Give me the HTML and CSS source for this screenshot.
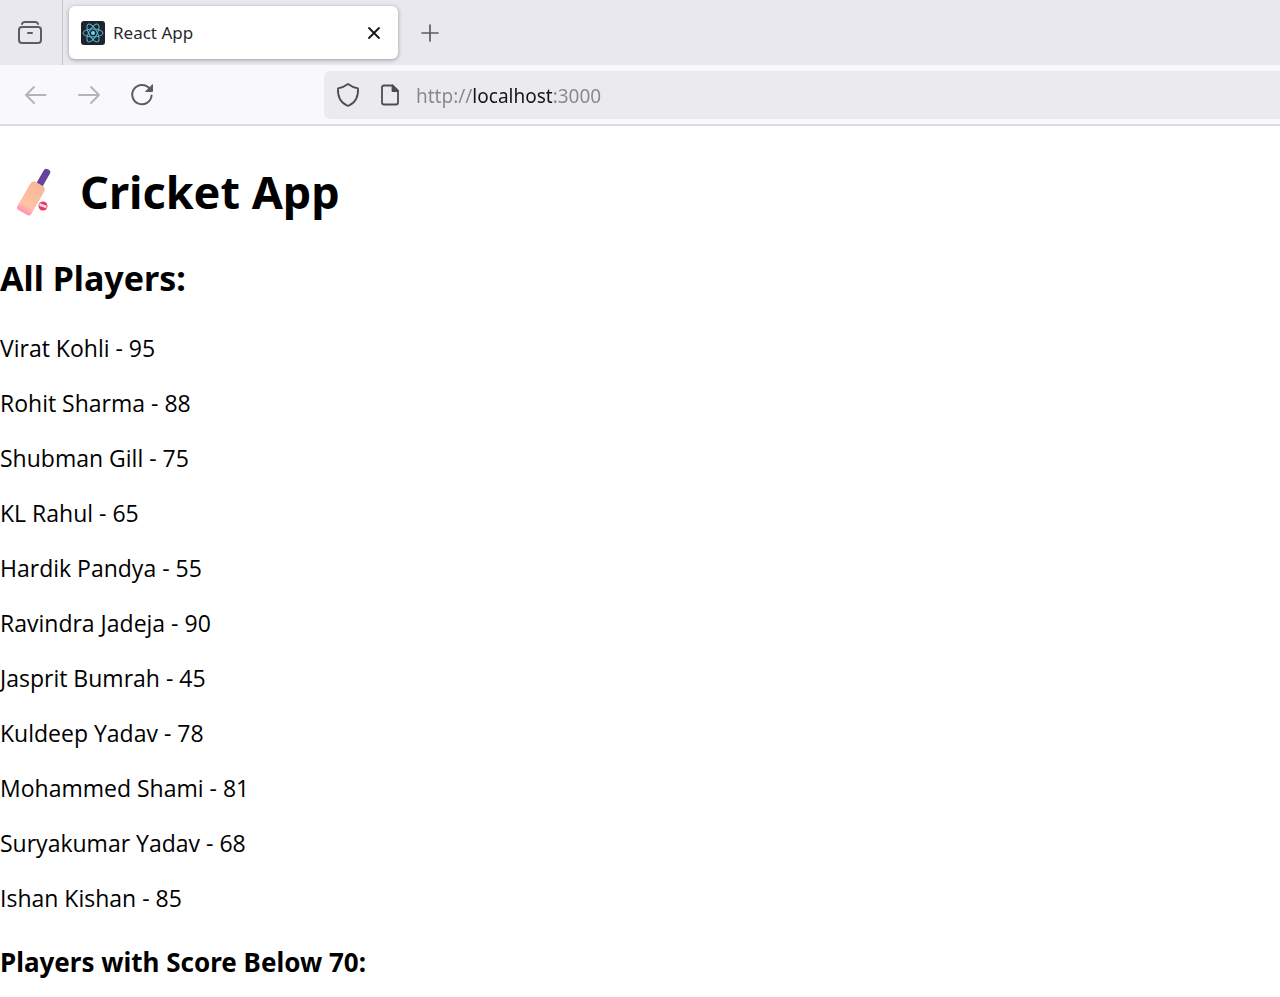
FILE: index.html
```html
<!DOCTYPE html>
<html lang="en">
<head>
<meta charset="utf-8">
<meta name="viewport" content="width=device-width, initial-scale=1">
<title>React App</title>
<link rel="stylesheet" href="styles.css">
</head>
<body>
<header class="browser">
  <div class="tab-strip">
    <button class="icon-button view-button" type="button" aria-label="Recent browsing">
      <svg width="26" height="26" viewBox="0 0 26 26" fill="none" stroke="#5b5b66" stroke-width="2" stroke-linecap="round">
        <path d="M5 4 Q5.500 2 8 2 H18 Q20.500 2 21 4" />
        <rect x="2" y="7" width="22" height="16" rx="3" />
        <path d="M11 13 H15" />
      </svg>
    </button>
    <div class="tab">
      <svg class="favicon" width="24" height="24" viewBox="0 0 24 24" fill="none" stroke="#53bfda">
        <rect width="24" height="24" rx="3" fill="#20232a" stroke="none" />
        <ellipse cx="12" cy="12" rx="10" ry="4" />
        <ellipse cx="12" cy="12" rx="10" ry="4" transform="rotate(60 12 12)" />
        <ellipse cx="12" cy="12" rx="10" ry="4" transform="rotate(120 12 12)" />
        <circle cx="12" cy="12" r="2" fill="#61dafb" stroke="none" />
      </svg>
      <span class="tab-title">React App</span>
      <button class="icon-button" type="button" aria-label="Close tab">
        <svg width="24" height="24" viewBox="0 0 24 24" fill="none" stroke="#15141a" stroke-width="1.800" stroke-linecap="round">
          <path d="M7 7 L17 17 M17 7 L7 17" />
        </svg>
      </button>
    </div>
    <button class="icon-button new-tab" type="button" aria-label="New tab">
      <svg width="24" height="24" viewBox="0 0 24 24" fill="none" stroke="#5b5b66" stroke-width="1.700" stroke-linecap="round">
        <path d="M12 4 V20 M4 12 H20" />
      </svg>
    </button>
  </div>
  <div class="toolbar">
    <nav class="history" aria-label="History">
      <button class="icon-button" type="button" aria-label="Back" disabled>
        <svg width="24" height="24" viewBox="0 0 24 24" fill="none" stroke="#b4b4ba" stroke-width="1.900" stroke-linecap="round" stroke-linejoin="round">
          <path d="M21.500 12 H2 M10 4 L2 12 L10 20" />
        </svg>
      </button>
      <button class="icon-button" type="button" aria-label="Forward" disabled>
        <svg width="24" height="24" viewBox="0 0 24 24" fill="none" stroke="#b4b4ba" stroke-width="1.900" stroke-linecap="round" stroke-linejoin="round">
          <path d="M2 12 H22 M14 4 L22 12 L14 20" />
        </svg>
      </button>
      <button class="icon-button" type="button" aria-label="Reload">
        <svg width="24" height="24" viewBox="0 0 24 24" fill="none" stroke="#5b5b66" stroke-width="2" stroke-linecap="round">
          <path d="M19.500 5.500 A9.700 9.700 0 1 0 21.600 12.500" />
          <path d="M22.500 2 V8.500 H16 Z" fill="#5b5b66" stroke-width="1" stroke-linejoin="round" />
        </svg>
      </button>
    </nav>
    <div class="address">
      <svg width="24" height="26" viewBox="0 0 24 26" fill="none" stroke="#4e4e52" stroke-width="1.800" stroke-linejoin="round">
        <path d="M12 2 Q16.500 5.500 22 6.300 C22.500 15 19.500 21 12 24 C4.500 21 1.500 15 2 6.300 Q7.500 5.500 12 2 Z" />
      </svg>
      <svg width="20" height="24" viewBox="0 0 20 24" fill="none" stroke="#4e4e52" stroke-width="1.800" stroke-linejoin="round">
        <path d="M12.500 2.500 H4 Q2 2.500 2 4.500 V19.500 Q2 21.500 4 21.500 H16 Q18 21.500 18 19.500 V8 Z" />
        <path d="M12.500 2.500 V8 H18 Z" fill="#4e4e52" />
      </svg>
      <input class="url" type="text" value="http://localhost:3000" aria-label="Address" spellcheck="false">
    </div>
  </div>
</header>
<main class="page">
  <h1 class="title">
    <svg width="68" height="52" viewBox="0 0 68 52" role="img" aria-label="Cricket bat and ball">
      <defs>
        <linearGradient id="blade" x1="0" y1="0" x2="0" y2="1">
          <stop offset="0" stop-color="#f5b797" />
          <stop offset="0.750" stop-color="#ffc3a5" />
          <stop offset="1" stop-color="#ff8fb8" />
        </linearGradient>
      </defs>
      <g transform="rotate(30 33 27)">
        <rect x="31" y="-1" width="7" height="22" rx="3" fill="#64439a" />
        <path d="M30 16 H38 Q42 16 42 21 V46 Q42 49 39 49 H29 Q26 49 26 46 V21 Q26 16 30 16 Z" fill="url(#blade)" />
      </g>
      <circle cx="43" cy="40" r="4.500" fill="#e9386c" />
      <path d="M39.500 38.500 L46.500 41" stroke="#ffd5e0" stroke-width="2.500" />
    </svg>
    <span>Cricket App</span>
  </h1>
  <h2 class="section">All Players:</h2>
  <p class="player">Virat Kohli - 95</p>
  <p class="player">Rohit Sharma - 88</p>
  <p class="player">Shubman Gill - 75</p>
  <p class="player">KL Rahul - 65</p>
  <p class="player">Hardik Pandya - 55</p>
  <p class="player">Ravindra Jadeja - 90</p>
  <p class="player">Jasprit Bumrah - 45</p>
  <p class="player">Kuldeep Yadav - 78</p>
  <p class="player">Mohammed Shami - 81</p>
  <p class="player">Suryakumar Yadav - 68</p>
  <p class="player">Ishan Kishan - 85</p>
  <h3 class="subsection">Players with Score Below 70:</h3>
</main>
</body>
</html>
```
FILE: styles.css
```css
* {
  box-sizing: border-box;
}

body {
  margin: 0;
  background: #fff;
  color: #000;
  font-family: "Noto Sans", "Open Sans", sans-serif;
}

.icon-button {
  display: flex;
  align-items: center;
  justify-content: center;
  padding: 0;
  border: 0;
  background: transparent;
}

.tab-strip {
  display: flex;
  align-items: center;
  height: 65px;
  background: #e9e8ee;
}

.view-button {
  width: 63px;
  height: 100%;
  padding-right: 3px;
  border-right: 1px solid #c4c3ca;
}

.tab {
  display: flex;
  align-items: center;
  gap: 8px;
  width: 329px;
  height: 53px;
  margin-left: 6px;
  padding: 0 12px;
  border-radius: 6px;
  background: #fff;
  box-shadow: 0 1px 4px rgba(0, 0, 0, 0.35);
}

.tab-title {
  flex: 1;
  color: #2a2930;
  font-size: 17px;
}

.new-tab {
  margin-left: 20px;
}

.toolbar {
  display: flex;
  align-items: center;
  height: 61px;
  border-bottom: 2px solid #dcdce0;
  background: #f9f9fb;
}

.history {
  display: flex;
  gap: 29px;
  width: 324px;
  padding-left: 24px;
}

.address {
  display: flex;
  flex: 1;
  align-items: center;
  gap: 20px;
  height: 48px;
  padding-left: 12px;
  border-radius: 6px 0 0 6px;
  background: #ebebed;
}

.url {
  flex: 1;
  min-width: 0;
  margin-left: -4px;
  padding: 3px 0 0;
  border: 0;
  outline: 0;
  /* The host name is darker than the scheme and the port. */
  background: linear-gradient(90deg, #88888c 56px, #15141a 56px, #15141a 137px, #88888c 137px);
  -webkit-background-clip: text;
  background-clip: text;
  color: #55555a;
  -webkit-text-fill-color: transparent;
  font: 19px "Noto Sans", "Open Sans", sans-serif;
}

.title {
  display: flex;
  align-items: center;
  gap: 12px;
  margin: 0;
  padding-top: 33px;
  font-size: 45px;
  line-height: 66px;
}

.section {
  margin: 29px 0 0;
  font-size: 34px;
  line-height: 48px;
}

.player {
  margin: 24px 0 0;
  font-family: "Open Sans", "Noto Sans", sans-serif;
  font-size: 23px;
  line-height: 31px;
}

.section + .player {
  margin-top: 31px;
}

.subsection {
  margin: 30px 0 0;
  font-size: 26px;
  line-height: 36px;
}
```
